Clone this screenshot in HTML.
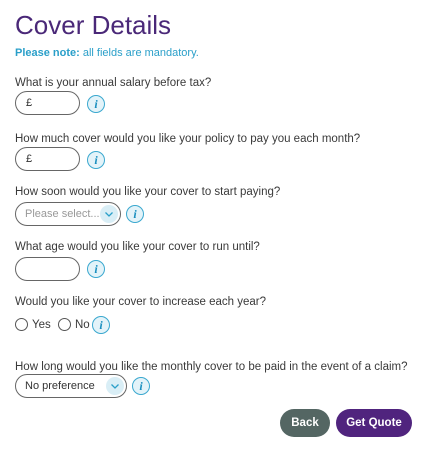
<!DOCTYPE html>
<html><head><style>
body{margin:0;width:424px;height:452px;background:#fff;font-family:"Liberation Sans",sans-serif;position:relative;overflow:hidden;color:#333}
h1{position:absolute;left:15px;top:10px;margin:0;font-size:26px;font-weight:normal;color:#4a2878}
.lbl{position:absolute;left:15px;font-size:11.5px;color:#3a3a3a;line-height:14px}
.inp{position:absolute;left:15px;width:65px;height:24px;border:1px solid #666;border-radius:12px;font-size:11px;line-height:22px;padding-left:10px;box-sizing:border-box}
.sel{position:absolute;left:15px;height:24px;border:1px solid #666;border-radius:12px;font-size:11px;line-height:22px;padding-left:9px;box-sizing:border-box}
.chev{position:absolute;right:2px;top:2px;width:18px;height:18px;border-radius:50%;background:#d9eef6}
.i{position:absolute;width:16px;height:16px;border:1px solid #3aa8cf;border-radius:50%;background:#e3f3f9;color:#1a8fbf;font:italic bold 12px/16px "Liberation Serif",serif;text-align:center}
.rad{position:absolute;width:11px;height:11px;border:1px solid #555;border-radius:50%}
.btn{position:absolute;top:409px;height:28px;border-radius:14px;color:#fff;font-weight:bold;font-size:11.5px;line-height:28px;text-align:center}
</style></head><body>
<h1>Cover Details</h1>
<div class="lbl" style="top:46px;color:#2a9fc9;font-size:11px"><b>Please note:</b> all fields are mandatory.</div>

<div class="lbl" style="top:76px">What is your annual salary before tax?</div>
<div class="inp" style="top:91px">£</div>
<div class="i" style="left:87px;top:95px">i</div>

<div class="lbl" style="top:132px">How much cover would you like your policy to pay you each month?</div>
<div class="inp" style="top:147px">£</div>
<div class="i" style="left:87px;top:151px">i</div>

<div class="lbl" style="top:185px">How soon would you like your cover to start paying?</div>
<div class="sel" style="top:202px;width:106px;color:#999">Please select...<div class="chev"><svg width="18" height="18"><path d="M5.5 7.5l3.5 3.5l3.5-3.5" fill="none" stroke="#2a9fc9" stroke-width="1.3"/></svg></div></div>
<div class="i" style="left:126px;top:205px">i</div>

<div class="lbl" style="top:240px">What age would you like your cover to run until?</div>
<div class="inp" style="top:257px"></div>
<div class="i" style="left:87px;top:260px">i</div>

<div class="lbl" style="top:295px">Would you like your cover to increase each year?</div>
<div class="rad" style="left:15px;top:318px"></div><div class="lbl" style="left:32px;top:318px">Yes</div>
<div class="rad" style="left:58px;top:318px"></div><div class="lbl" style="left:75px;top:318px">No</div>
<div class="i" style="left:92px;top:316px">i</div>

<div class="lbl" style="top:360px">How long would you like the monthly cover to be paid in the event of a claim?</div>
<div class="sel" style="top:374px;width:112px;color:#333">No preference<div class="chev"><svg width="18" height="18"><path d="M5.5 7.5l3.5 3.5l3.5-3.5" fill="none" stroke="#2a9fc9" stroke-width="1.3"/></svg></div></div>
<div class="i" style="left:132px;top:377px">i</div>

<div class="btn" style="left:280px;width:50px;background:#546663">Back</div>
<div class="btn" style="left:336px;width:76px;background:#50247e">Get Quote</div>
</body></html>
